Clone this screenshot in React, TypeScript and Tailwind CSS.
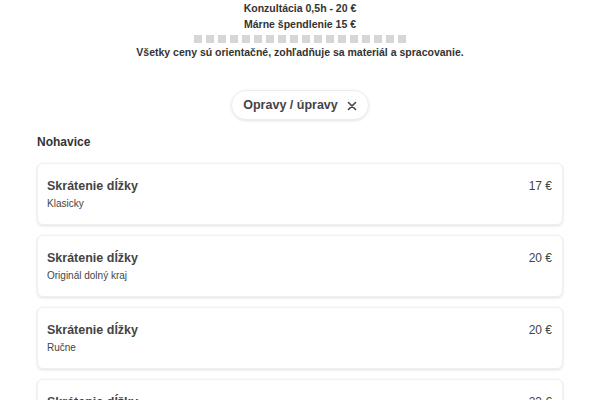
import React from "react";

const items = [
  { title: "Skrátenie dĺžky", sub: "Klasicky", price: "17 €" },
  { title: "Skrátenie dĺžky", sub: "Originál dolný kraj", price: "20 €" },
  { title: "Skrátenie dĺžky", sub: "Ručne", price: "20 €" },
  { title: "Skrátenie dĺžky", sub: "Na mieru", price: "23 €" },
];

export default function App() {
  return (
    <div
      className="w-[600px] h-[400px] overflow-hidden bg-white text-[#333]"
      style={{ fontFamily: '"Liberation Sans", Arial, sans-serif' }}
    >
      <div className="flex flex-col items-center text-[10.5px] font-bold leading-[16px]">
        <div>Konzultácia 0,5h - 20 €</div>
        <div>Márne špendlenie 15 €</div>
        <div className="flex gap-[4px] mt-[3px] mb-[1px]">
          {Array.from({ length: 18 }).map((_, i) => (
            <span key={i} className="block w-[8px] h-[8px] bg-[#d6d6d6]" />
          ))}
        </div>
        <div>Všetky ceny sú orientačné, zohľadňuje sa materiál a spracovanie.</div>
      </div>

      <div className="flex justify-center mt-[30px]">
        <div className="flex items-center gap-[9px] h-[30px] px-[11px] rounded-full border border-[#ececec] shadow-[0_1px_3px_rgba(0,0,0,0.12)] text-[12.5px] font-bold text-[#444]">
          <span>Opravy / úpravy</span>
          <svg width="10" height="10" viewBox="0 0 10 10" className="mt-[1px]">
            <path d="M1.5 1.5 L8.5 8.5 M8.5 1.5 L1.5 8.5" stroke="#444" strokeWidth="1.6" strokeLinecap="round" />
          </svg>
        </div>
      </div>

      <div className="px-[37px] mt-[14px]">
        <div className="text-[12px] font-bold text-[#333] leading-[16px]">Nohavice</div>
        <div className="flex flex-col gap-[10px] mt-[13px]">
          {items.map((it, i) => (
            <div
              key={i}
              className="h-[62px] rounded-[6px] bg-white border border-[#f0f0f0] shadow-[0_1px_3px_rgba(0,0,0,0.12)] flex justify-between pl-[9px] pr-[10px] pt-[14px]"
            >
              <div>
                <div className="text-[12.5px] font-bold text-[#444] leading-[16px]">{it.title}</div>
                <div className="text-[10px] text-[#444] leading-[14px] mt-[3px]">{it.sub}</div>
              </div>
              <div className="text-[12px] text-[#444] leading-[16px]">{it.price}</div>
            </div>
          ))}
        </div>
      </div>
    </div>
  );
}
